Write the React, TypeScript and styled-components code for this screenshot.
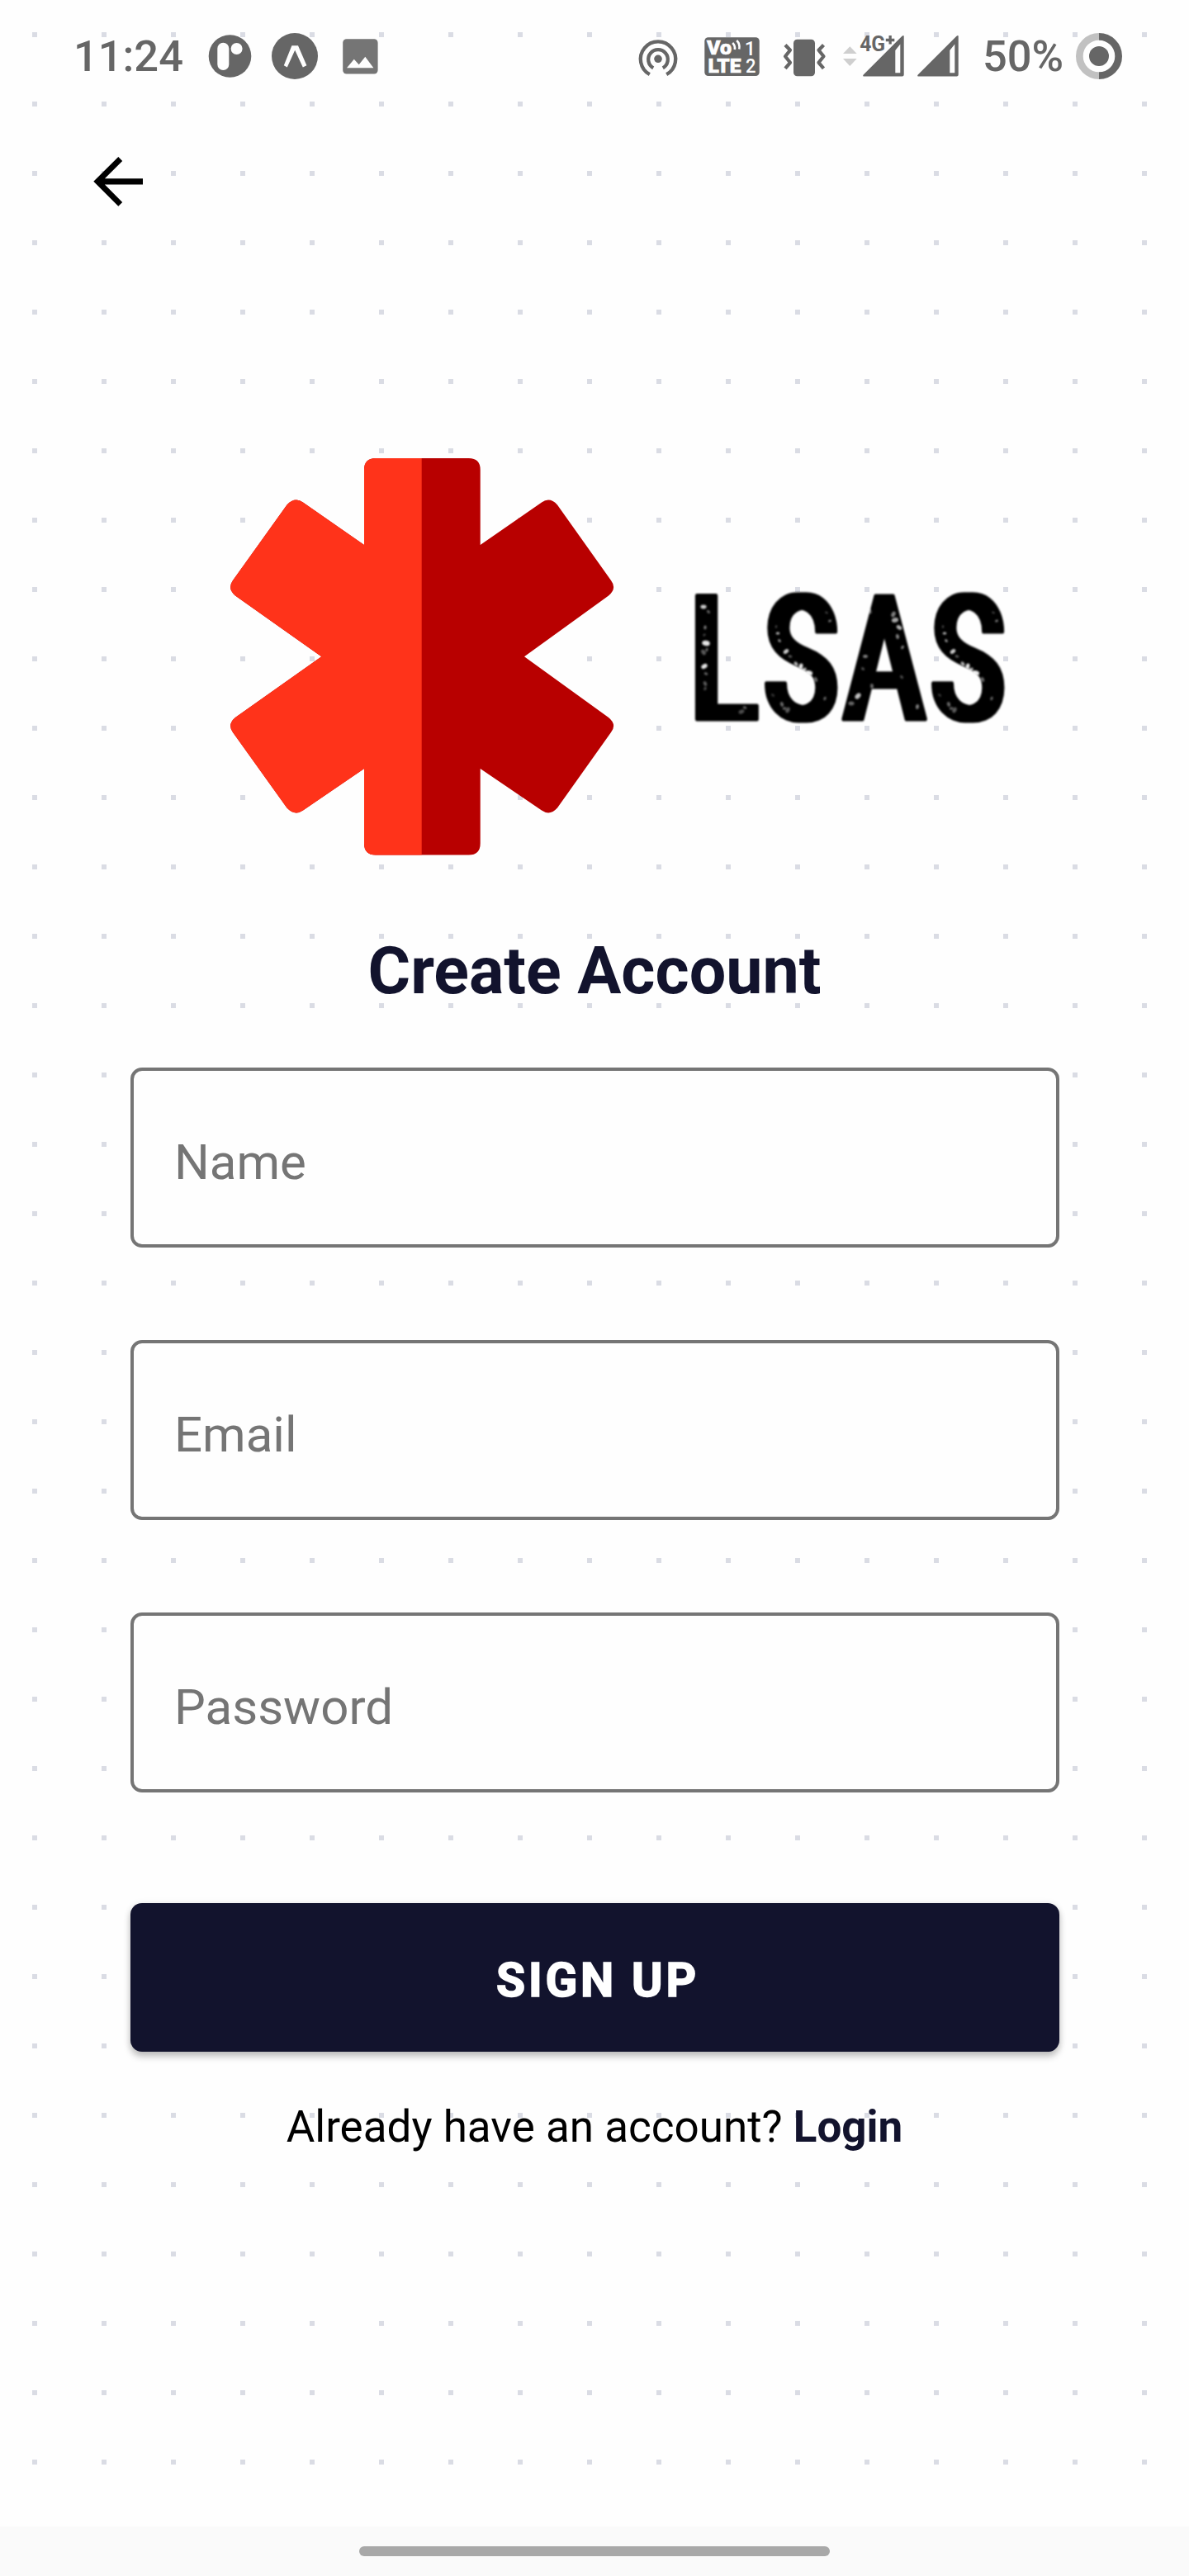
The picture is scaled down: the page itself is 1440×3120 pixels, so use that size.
import React from 'react';
import styled, { createGlobalStyle } from 'styled-components';

const GlobalStyle = createGlobalStyle`
  * { box-sizing: border-box; }
  body { margin: 0; background: #fefefe; font-family: Roboto, 'Liberation Sans', sans-serif; }
  svg { display: block; flex: none; overflow: visible; }
`;

const Screen = styled.div`
  width: 1440px;
  height: 3120px;
  display: flex;
  flex-direction: column;
  overflow: hidden;
  background-color: #fefefe;
  background-image: conic-gradient(at 6px 6px, transparent 75%, #dadce4 0);
  background-size: 84px 84px;
  background-position: 39px 39px;
`;

const StatusBar = styled.header`
  height: 136px;
  flex: none;
  display: flex;
  align-items: center;
  justify-content: space-between;
  padding: 0 81px 0 89px;
`;

const StatusGroup = styled.div`
  display: flex;
  align-items: center;
`;

const StatusText = styled.span<{ $width: number; $indent?: number }>`
  width: ${(p) => p.$width}px;
  padding-left: ${(p) => p.$indent ?? 0}px;
  font-size: 52.4px;
  line-height: 62px;
  font-weight: 500;
  color: #666;
  white-space: nowrap;
`;

const TopBar = styled.nav`
  height: 168px;
  flex: none;
  display: flex;
  align-items: center;
  padding-left: 101px;
`;

const BackButton = styled.button`
  width: 84px;
  height: 84px;
  padding: 0;
  border: 0;
  background: transparent;
`;

const Content = styled.main`
  flex: 1;
  display: flex;
  flex-direction: column;
  align-items: center;
  padding-top: 246px;
`;

const Title = styled.h1`
  margin: 76px 0 0;
  font-size: 79px;
  line-height: 120px;
  font-weight: 700;
  color: #12132d;
  white-space: nowrap;
`;

const Form = styled.form`
  width: 1125px;
  margin: 57px 0 0 1px;
  display: flex;
  flex-direction: column;
  gap: 112px;
`;

const Field = styled.input`
  width: 100%;
  height: 218px;
  padding: 10px 50px 0 49px;
  border: 4px solid #757575;
  border-radius: 14px;
  outline: 0;
  background: #fefefe;
  font: 400 60px/70px Roboto, sans-serif;
  color: #111;
  &::placeholder { color: #757575; opacity: 1; }
`;

const SubmitButton = styled.button`
  width: 100%;
  height: 180px;
  margin-top: 22px;
  padding: 8px 0 0 7px;
  border: 0;
  border-radius: 14px;
  background: #12132d;
  color: #fff;
  font: 700 57px/70px Roboto, sans-serif;
  letter-spacing: 3.8px;
  -webkit-text-stroke: 1.6px #fff;
  box-shadow: 0 6px 9px rgba(0, 0, 0, 0.22), 0 1px 8px rgba(0, 0, 0, 0.1);
`;

const Prompt = styled.p`
  margin: 58px 0 0;
  font-size: 53px;
  line-height: 66px;
  color: #000;
  white-space: nowrap;
`;

const LoginLink = styled.a`
  font-weight: 700;
  color: #12132d;
`;

const GestureBar = styled.footer`
  height: 60px;
  flex: none;
  display: flex;
  align-items: center;
  justify-content: center;
  background: #fafafa;
`;

const Handle = styled.div`
  width: 570px;
  height: 12px;
  border-radius: 6px;
  background: #a8a8a8;
`;

const NotificationIcons = () => (
  <svg width="216" height="60" viewBox="248 38 216 60" fill="#666">
    <circle cx="278.5" cy="68" r="25.8" />
    <rect x="263.3" y="51.7" width="14" height="33.3" rx="7" fill="#fefefe" />
    <circle cx="286.6" cy="59" r="7" fill="#fefefe" />
    <circle cx="357" cy="68" r="28" />
    <path d="M353.4 55.2H361L371.4 79.2 366.8 81.5 357.2 60.8 347.8 81.5 343.8 79.2Z" fill="#fefefe" />
    <rect x="415.2" y="47.3" width="42.4" height="42.3" rx="4.5" fill="#757575" />
    <path d="M420 82.3L428.8 71.7 434.7 78.3 442.3 68.7 452.4 82.3Z" fill="#fefefe" />
  </svg>
);

const SystemIcons = () => (
  <svg width="390" height="60" viewBox="773 38 390 60" fill="#666">
    <circle cx="797" cy="71.3" r="4.8" />
    <g fill="none" stroke="#666" strokeWidth="4.3">
      <path d="M791.2 82.3a11.8 11.8 0 1 1 11.6 0" />
      <path d="M786.8 90.2a21.2 21.2 0 1 1 20.4 0" />
    </g>
    <rect x="853.3" y="45.3" width="66.4" height="46.8" rx="4.5" />
    <g fill="#fefefe" fontFamily="Roboto, sans-serif" fontWeight="900">
      <text x="856" y="66.2" fontSize="24" textLength="30" lengthAdjust="spacingAndGlyphs" stroke="#fefefe" strokeWidth="0.6">Vo</text>
      <text x="857.5" y="88" fontSize="24" textLength="40" lengthAdjust="spacingAndGlyphs" stroke="#fefefe" strokeWidth="0.6">LTE</text>
      <text x="901.8" y="66.7" fontSize="23.5" fontWeight="500">1</text>
      <text x="903" y="88" fontSize="23.5" fontWeight="500" textLength="12.5" lengthAdjust="spacingAndGlyphs">2</text>
    </g>
    <g fill="none" stroke="#fefefe" strokeWidth="2.6">
      <path d="M887.2 52q3.4 3.2 2.6 8" />
      <path d="M892.2 49q4.4 4.4 3 10.5" />
    </g>
    <rect x="961" y="47.7" width="26" height="44.5" rx="4.5" />
    <g fill="none" stroke="#666" strokeWidth="4.2" strokeLinejoin="round">
      <path d="M951 54.5l6 6.3-6 7.5 6 7.5-6 7" />
      <path d="M997.5 54.5l-6 6.3 6 7.5-6 7.5 6 7" />
    </g>
    <path d="M1029.3 56.3l8.4 8.7h-16.7zM1021 71h16.7l-8.4 9z" fill="#cfcfcf" />
    <text x="1041.2" y="61.7" fontFamily="Roboto, sans-serif" fontWeight="700" fontSize="25" textLength="31" lengthAdjust="spacingAndGlyphs">4G</text>
    <path d="M1076.5 43h3.3v3.8h3.5v3.4h-3.5v3.3h-3.3v-3.3h-3.7v-3.4h3.7z" />
    {[0, 66].map((dx) => (
      <path
        key={dx}
        transform={`translate(${dx} 0)`}
        fillRule="evenodd"
        d="M1094.7 44v46.5q0 2-2 2h-46q-2.5 0-1-2l46.5-46.5q2.5-2 2.5 0zM1090.3 53.5l-6 7.5v27.3h6z"
      />
    ))}
  </svg>
);

const BatteryRing = () => (
  <svg width="56" height="56" viewBox="0 0 56 56" fill="none" strokeWidth="8.7">
    <path d="M28 4.35a23.65 23.65 0 0 0 0 47.3" stroke="#c1c1c1" />
    <path d="M28 4.35a23.65 23.65 0 0 1 0 47.3" stroke="#666" />
    <circle cx="28" cy="28" r="12" fill="#666" />
  </svg>
);

const ArrowLeft = () => (
  <svg width="84" height="84" viewBox="101 178 84 84">
    <path d="M113.3 219.8l30-29.8 4.9 4.9-21.3 21.3h46.1v7.4h-46.1l21.3 21.3-4.9 4.9z" />
  </svg>
);

// Worn-ink flecks: x, y, radius, opacity
const S_FLECKS = [
  [15, 51, 2, 0.7], [17, 60, 1.8, 0.6], [13, 43, 1.5, 0.3], [25, 73, 3, 0.8], [30, 79, 2, 0.35], [37, 88, 2.5, 0.7],
  [43, 91, 3, 0.9], [47, 95, 2.5, 0.7], [53, 99, 3.5, 0.9], [61, 107, 2.5, 0.4], [72, 130, 2, 0.4],
  [78, 36, 1.7, 0.5], [74, 26, 1.5, 0.3], [20, 137, 2.5, 0.4], [27, 144, 3, 0.35], [23, 142, 2, 0.4], [9, 126, 2, 0.2],
];
const LA_FLECKS = [
  [852, 735, 3, 0.8], [858, 741, 2, 0.4], [854, 760, 2, 0.5], [853, 769, 1.5, 0.3], [855, 779, 4, 0.9], [852, 790, 3, 0.35],
  [856, 787, 2, 0.4], [853, 807, 3.3, 0.9], [855, 816, 2, 0.4], [854, 828, 2.5, 0.35], [854, 834, 2, 0.3],
  [898, 862, 3, 0.3], [902, 857, 2, 0.4],
  [1053, 740, 3, 0.4], [1082, 744, 3, 0.5], [1084, 751, 3.5, 0.65], [1089, 760, 3, 0.7], [1087, 771, 2.5, 0.5],
  [1093, 784, 2, 0.5], [1048, 795, 2.5, 0.5], [1045, 810, 2, 0.3], [1056, 831, 2.5, 0.4], [1039, 843, 3.5, 0.75],
  [1031, 852, 3, 0.4], [1092, 820, 2, 0.3], [1111, 856, 2.5, 0.5],
];

const LETTERS = [
  { ch: 'L', x: 836.5, sx: 0.7 },
  { ch: 'S', x: 927, sx: 0.69 },
  { ch: 'A', x: 1024, sx: 0.685 },
  { ch: 'S', x: 1129, sx: 0.69 },
];

const Fleck = ({ x, y, r, o, turn }: { x: number; y: number; r: number; o: number; turn: number }) => (
  <ellipse rx={r * 1.2} ry={r * 0.8} opacity={o} transform={`translate(${x} ${y}) rotate(${turn})`} />
);

const LogoArt = () => (
  <svg width="900" height="490" viewBox="270 550 900 490">
    <defs>
      <clipPath id="leftHalf"><rect x="270" y="550" width="240.7" height="490" /></clipPath>
      <filter id="ink" x="-5%" y="-5%" width="110%" height="110%">
        <feMorphology operator="dilate" radius="5 0.01" />
        <feGaussianBlur stdDeviation="0.8" />
      </filter>
      <filter id="soft"><feGaussianBlur stdDeviation="0.8" /></filter>
    </defs>
    {['#b80000', '#ff331a'].map((fill, i) => (
      <path
        key={fill}
        fill={fill}
        clipPath={i ? 'url(#leftHalf)' : undefined}
        d="M441 660V569Q441 555 455 555H567.7Q581.7 555 581.7 569V660L656 608.5Q666 601.5 675 611.5L740 703Q747.5 713 737 721.5L635 795.3L737 869Q747.5 877.5 740 887L675 978.5Q666 988.5 656 981.5L581.7 931V1021.5Q581.7 1035.5 567.7 1035.5H455Q441 1035.5 441 1021.5V931L367 981.5Q357 988.5 347.5 978.5L282 887Q275 877.5 285 869L389.3 795.3L285 721.5Q275 713 282 703L347.5 611.5Q357 601.5 367 608.5Z"
      />
    ))}
    <g filter="url(#ink)" fontFamily="Roboto, sans-serif" fontWeight="400" fontSize="210.5" stroke="#000" strokeWidth="5" strokeLinejoin="round">
      {LETTERS.map((l) => (
        <text key={l.x} transform={`translate(${l.x} 870.7) scale(${l.sx} 1)`}>{l.ch}</text>
      ))}
    </g>
    <g fill="#fefefe" filter="url(#soft)">
      {LA_FLECKS.map(([x, y, r, o], i) => <Fleck key={`${x}-${y}`} x={x} y={y} r={r} o={o} turn={i * 47} />)}
      {[927, 1129].map((dx) =>
        S_FLECKS.map(([x, y, r, o], i) => <Fleck key={`${dx}-${x}-${y}`} x={dx + x} y={716 + y} r={r} o={o} turn={i * 47} />),
      )}
    </g>
  </svg>
);

export default function App() {
  return (
    <>
      <GlobalStyle />
      <Screen>
        <StatusBar>
          <StatusGroup>
            <StatusText $width={159}>11:24</StatusText>
            <NotificationIcons />
          </StatusGroup>
          <StatusGroup>
            <SystemIcons />
            <StatusText $width={140} $indent={27}>50%</StatusText>
            <BatteryRing />
          </StatusGroup>
        </StatusBar>
        <TopBar>
          <BackButton type="button" aria-label="Back"><ArrowLeft /></BackButton>
        </TopBar>
        <Content>
          <LogoArt />
          <Title>Create Account</Title>
          <Form>
            <Field placeholder="Name" />
            <Field placeholder="Email" />
            <Field placeholder="Password" />
            <SubmitButton type="button">SIGN UP</SubmitButton>
          </Form>
          <Prompt>Already have an account? <LoginLink>Login</LoginLink></Prompt>
        </Content>
        <GestureBar><Handle /></GestureBar>
      </Screen>
    </>
  );
}
